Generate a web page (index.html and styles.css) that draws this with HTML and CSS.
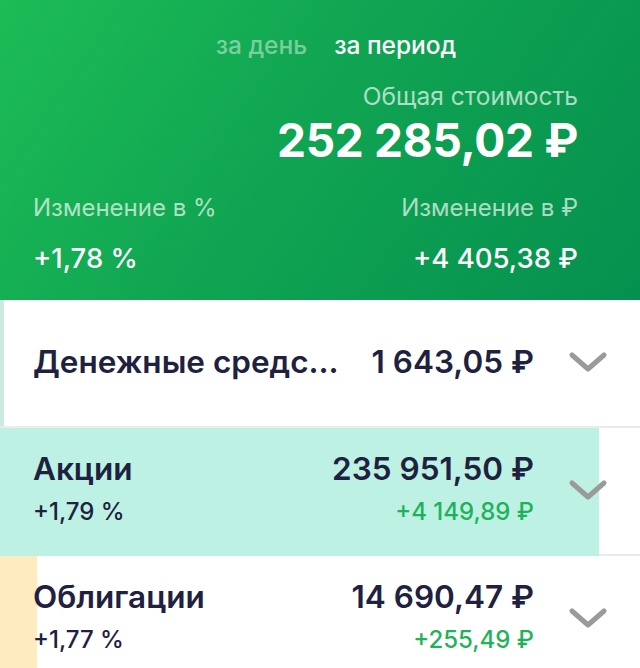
FILE: index.html
```html
<!DOCTYPE html>
<html lang="ru">
<head>
<meta charset="utf-8">
<link rel="stylesheet" href="styles.css">
</head>
<body>
<div class="screen">
  <header class="summary">
    <nav class="tabs">
      <span class="tab">за день</span>
      <span class="tab active">за период</span>
    </nav>
    <div class="total">
      <div class="label">Общая стоимость</div>
      <div class="total-value">252 285,02 ₽</div>
    </div>
    <div class="changes">
      <div class="change">
        <div class="label">Изменение в %</div>
        <div class="change-value">+1,78 %</div>
      </div>
      <div class="change right">
        <div class="label">Изменение в ₽</div>
        <div class="change-value">+4 405,38 ₽</div>
      </div>
    </div>
  </header>

  <section class="rows">
    <div class="row">
      <div class="bar bar-cash" style="width:4px"></div>
      <div class="row-main">
        <div class="title">Денежные средс...</div>
      </div>
      <div class="row-side">
        <div class="amount">1 643,05 ₽</div>
      </div>
      <svg class="chevron" viewBox="0 0 40 24"><path d="M4 5 L20 19 L36 5"/></svg>
    </div>

    <div class="row">
      <div class="bar bar-stocks" style="width:599px"></div>
      <div class="row-main">
        <div class="title">Акции</div>
        <div class="sub">+1,79 %</div>
      </div>
      <div class="row-side">
        <div class="amount">235 951,50 ₽</div>
        <div class="sub gain">+4 149,89 ₽</div>
      </div>
      <svg class="chevron" viewBox="0 0 40 24"><path d="M4 5 L20 19 L36 5"/></svg>
    </div>

    <div class="row">
      <div class="bar bar-bonds" style="width:37px"></div>
      <div class="row-main">
        <div class="title">Облигации</div>
        <div class="sub">+1,77 %</div>
      </div>
      <div class="row-side">
        <div class="amount">14 690,47 ₽</div>
        <div class="sub gain">+255,49 ₽</div>
      </div>
      <svg class="chevron" viewBox="0 0 40 24"><path d="M4 5 L20 19 L36 5"/></svg>
    </div>
  </section>
</div>
</body>
</html>
```

FILE: styles.css
```css
* { box-sizing: border-box; }
html, body { margin: 0; padding: 0; }
body {
  font-family: "Inter", "Roboto", "Noto Sans", sans-serif;
  background: #ffffff;
  width: 640px;
  height: 668px;
  overflow: hidden;
}
.screen { width: 640px; }

.summary {
  height: 300px;
  padding: 30px 62px 0 33px;
  background: linear-gradient(125deg, #1dbc56 0%, #10a552 45%, #05904f 100%);
  color: #ffffff;
}
.tabs {
  display: flex;
  justify-content: center;
  gap: 27px;
  padding-left: 61px;
  height: 30px;
  line-height: 30px;
  font-size: 24.5px;
  font-weight: 500;
}
.tab { color: rgba(255, 255, 255, 0.45); }
.tab.active { color: #ffffff; }

.label {
  font-size: 24px;
  line-height: 30px;
  color: rgba(255, 255, 255, 0.68);
}
.total {
  text-align: right;
  margin-top: 21px;
}
.total .label { font-size: 24.5px; }
.total-value {
  margin-top: 4px;
  font-size: 46px;
  line-height: 50px;
  font-weight: 700;
  letter-spacing: -0.3px;
}
.changes {
  display: flex;
  justify-content: space-between;
  margin-top: 28px;
}
.change.right { text-align: right; }
.change-value {
  margin-top: 20px;
  font-size: 27.5px;
  line-height: 30px;
  font-weight: 500;
}

.rows { display: flex; flex-direction: column; }
.row {
  position: relative;
  display: flex;
  align-items: center;
  height: 128px;
  padding: 0 32px 2px 33px;
  border-bottom: 2px solid #ebebeb;
  color: #1e2140;
}
.bar {
  position: absolute;
  left: 0;
  top: 0;
  bottom: -2px;
}
.bar-cash { background: #cdeae2; bottom: 0; }
.bar-stocks { background: #bdf1e3; }
.bar-bonds { background: #ffebc0; }

.row-main {
  position: relative;
  flex: 1;
  min-width: 0;
  margin-right: 30px;
  white-space: nowrap;
}
.row-side {
  position: relative;
  text-align: right;
  white-space: nowrap;
}
.title, .amount {
  font-size: 31.5px;
  line-height: 38px;
  font-weight: 600;
}
.sub {
  margin-top: 5px;
  font-size: 24px;
  line-height: 38px;
  font-weight: 500;
}
.gain { color: #1fb25a; }

.chevron {
  position: relative;
  width: 40px;
  height: 24px;
  margin-left: 34px;
  flex: none;
}
.chevron path {
  fill: none;
  stroke: #9a9a9a;
  stroke-width: 5;
  stroke-linecap: round;
  stroke-linejoin: round;
}
```
